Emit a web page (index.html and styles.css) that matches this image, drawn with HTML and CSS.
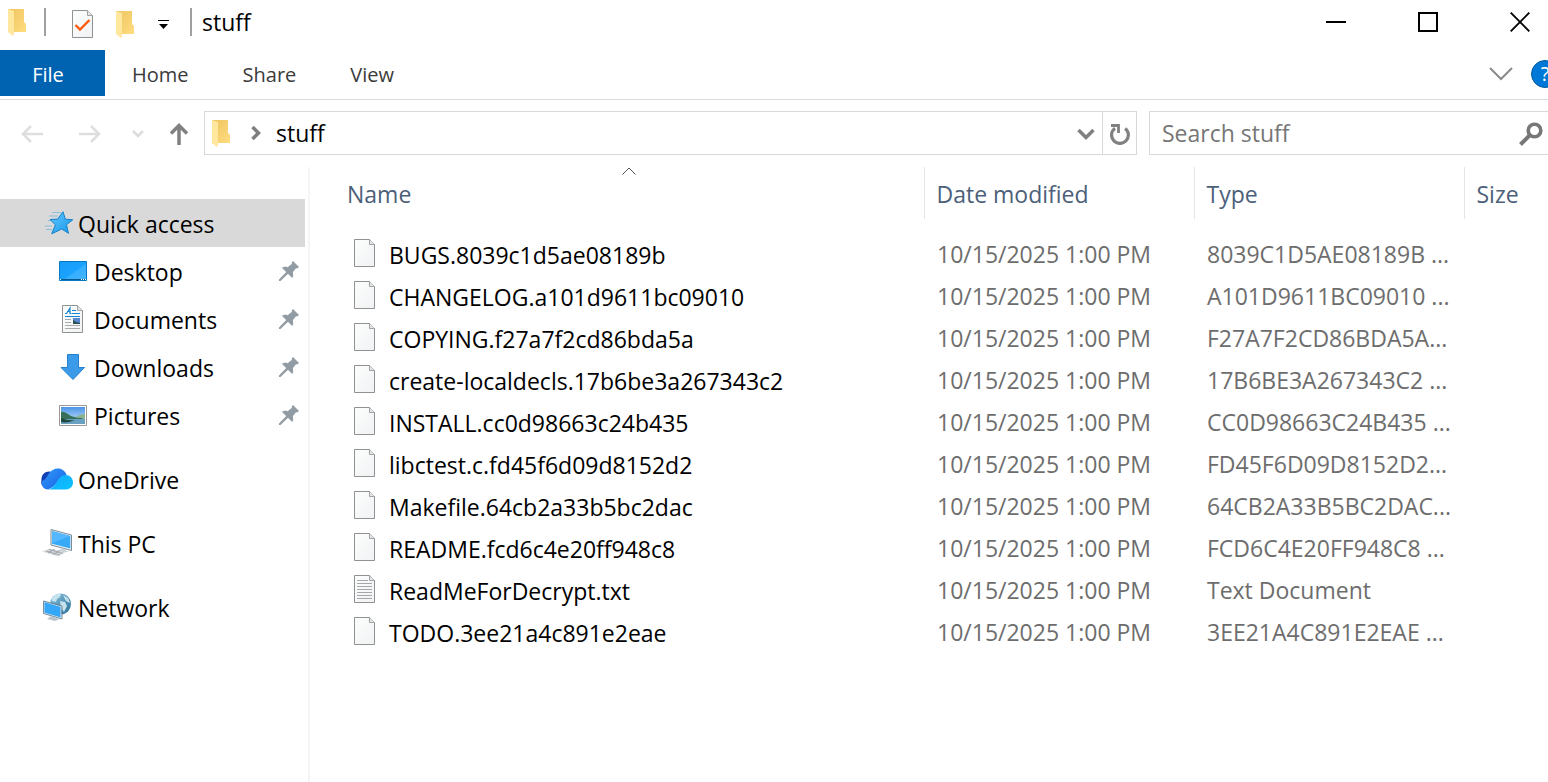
FILE: index.html
```html
<!doctype html>
<html lang="en">
<head>
	<meta charset="UTF-8">
	<title>stuff</title>
	<link rel="stylesheet" href="styles.css">
</head>
<body>
	<!-- shared icons -->
	<svg class="defs" aria-hidden="true">
		<defs>
			<linearGradient id="gFolder" x1="0" x2="1" y2="1"><stop offset="0" stop-color="#eec35f"/><stop offset="1" stop-color="#ffdd80"/></linearGradient>
			<linearGradient id="gPaper" x2="1" y2="1"><stop offset="0" stop-color="#fdfefe"/><stop offset="1" stop-color="#f0f2f3"/></linearGradient>
			<linearGradient id="gScreen" x2="1" y2="1"><stop offset="0" stop-color="#169cf8"/><stop offset=".55" stop-color="#1ba2ff"/><stop offset=".56" stop-color="#35aeff"/><stop offset="1" stop-color="#45b4ff"/></linearGradient>
			<linearGradient id="gStar" x2="1" y2="1"><stop offset="0" stop-color="#63c8ff"/><stop offset="1" stop-color="#1695e8"/></linearGradient>
			<linearGradient id="gCloud" x2="1" y2="1"><stop offset="0" stop-color="#2f9bf8"/><stop offset="1" stop-color="#1a5ee6"/></linearGradient>
			<linearGradient id="gCloud2" x2="1" y2="1"><stop offset="0" stop-color="#12a8fb"/><stop offset="1" stop-color="#0cc3ff"/></linearGradient>
			<linearGradient id="gGlobe" x2="1" y2="1"><stop offset="0" stop-color="#8fc4dd"/><stop offset="1" stop-color="#246f99"/></linearGradient>
			<linearGradient id="gSky" x2="0" y2="1"><stop offset="0" stop-color="#4a93e8"/><stop offset="1" stop-color="#d5ecfa"/></linearGradient>
		</defs>
		<symbol id="folder" viewBox="0 0 19 27">
			<path d="M0 0h16v13l2 2v8H5z" fill="url(#gFolder)"/>
			<path d="M0 0l6 2v23l-1 2-5-4z" fill="#ffe79d"/>
		</symbol>
		<symbol id="file" viewBox="0 0 21 28">
			<path d="M.5.5h15l5 5v22H.5z" fill="url(#gPaper)" stroke="#8f9193"/>
			<path d="M15.500.5v5h5" fill="#e4e6e7" stroke="#a0a2a4"/>
		</symbol>
		<symbol id="text" viewBox="0 0 21 28">
			<use href="#file"/>
			<path d="M3 5.500h11M3 8.500h15M3 11.500h15M3 14.500h15M3 17.500h15M3 20.500h15M3 23.500h15" stroke="#a5a7a9"/>
		</symbol>
		<symbol id="pin" viewBox="0 0 20 20">
			<path d="M14 0l6 6-2 1.500-1-.3-3.200 4c.8 2.300.5 4.500-.6 5.800L9 12.800 1.500 20H0v-1.500L7.200 11 3 7c1.500-1.400 3.800-1.400 5.600-.7L12.800 3V1.500z" fill="#919ba3"/>
		</symbol>
	</svg>

	<header class="titlebar">
		<svg class="folder" aria-hidden="true"><use href="#folder"/></svg>
		<span class="sep"></span>
		<button class="quick props" aria-label="Properties">
			<svg width="21" height="28" viewBox="0 0 21 28"><use href="#file"/><path d="M3.500 15l4.500 4.500 9.500-9.500" fill="none" stroke="#fa5a0f" stroke-width="2.400"/></svg>
		</button>
		<button class="quick new" aria-label="New folder"><svg class="folder"><use href="#folder"/></svg></button>
		<button class="quick more" aria-label="Customize Quick Access Toolbar">
			<svg width="11" height="9" viewBox="0 0 11 9"><path d="M0 0h11v1H0zM1 4h9L5.500 9z"/></svg>
		</button>
		<span class="sep"></span>
		<h1>stuff</h1>
		<div class="winbtns">
			<button aria-label="Minimize"><svg width="20" height="20"><path d="M0 10h20" stroke="#000" stroke-width="2"/></svg></button>
			<button aria-label="Maximize"><svg width="20" height="20"><path d="M1 1h18v18H1z" fill="none" stroke="#000" stroke-width="2"/></svg></button>
			<button aria-label="Close"><svg width="20" height="20"><path d="M.7.7l18.600 18.600M19.300.7L.7 19.300" stroke="#000" stroke-width="1.900"/></svg></button>
		</div>
	</header>

	<nav class="ribbon">
		<button class="tab on">File</button>
		<button class="tab">Home</button>
		<button class="tab">Share</button>
		<button class="tab">View</button>
		<button class="expand" aria-label="Expand the Ribbon"><svg width="24" height="14"><path d="M1 1l11 11L23 1" fill="none" stroke="#8a8a8a" stroke-width="2"/></svg></button>
		<button class="help" aria-label="Help">?</button>
	</nav>

	<div class="toolbar">
		<button class="back" aria-label="Back" disabled><svg width="22" height="18"><path d="M22 9H2M10 1L2 9l8 8" fill="none" stroke="#dedede" stroke-width="2.500"/></svg></button>
		<button class="forward" aria-label="Forward" disabled><svg width="22" height="18"><path d="M0 9h20M12 1l8 8-8 8" fill="none" stroke="#dedede" stroke-width="2.500"/></svg></button>
		<button class="recent" aria-label="Recent locations"><svg width="12" height="8"><path d="M1 1l5 5 5-5" fill="none" stroke="#dcdcdc" stroke-width="2.500"/></svg></button>
		<button class="up" aria-label="Up"><svg width="18" height="22"><path d="M9 22V2M1 10.500l8-8 8 8" fill="none" stroke="#808080" stroke-width="3.500"/></svg></button>
		<div class="address">
			<svg class="folder" aria-hidden="true"><use href="#folder"/></svg>
			<svg class="arrow" width="10" height="14" aria-hidden="true"><path d="M1.500 1l6 6-6 6" fill="none" stroke="#7e7e7e" stroke-width="3.500"/></svg>
			<a href="#">stuff</a>
			<button class="drop" aria-label="Previous locations"><svg width="18" height="12"><path d="M1.500 2L9 9.500 16.500 2" fill="none" stroke="#808080" stroke-width="3.500"/></svg></button>
			<button class="refresh" aria-label="Refresh">
				<svg width="20" height="21"><path d="M15.200 4.400A8.400 8.400 0 1 1 5 4.200" fill="none" stroke="#808080" stroke-width="3.200"/><path d="M1 1.500h7.500V9" fill="none" stroke="#808080" stroke-width="2.800"/></svg>
			</button>
		</div>
		<form class="search">
			<input type="text" placeholder="Search stuff" aria-label="Search stuff">
			<button type="button" aria-label="Search"><svg width="24" height="24"><circle cx="15.500" cy="8.500" r="6.300" fill="none" stroke="#777" stroke-width="3.600"/><path d="M11 13L1.500 22.500" stroke="#777" stroke-width="4"/></svg></button>
		</form>
	</div>

	<div class="main">
		<nav class="side">
			<ul>
				<li class="on"><a href="#">
					<svg width="28" height="24" viewBox="0 0 28 24"><path d="M7 1.500h9M4 5h9M3 9.500h6M0 15h7M1 18.500h6" stroke="#79b8df" stroke-width=".8"/><path d="M18 .8l2.400 7.500 7.400.4-6.300 5 2 8.600-6.800-4.300-10 4.800 3.700-9L5 8.500l7.700-.4z" fill="url(#gStar)" stroke="#1481cc"/></svg>
					<span>Quick access</span></a></li>
				<li class="sub"><a href="#">
					<svg width="28" height="20" viewBox="0 0 28 20"><path d="M.5.5h27v19H.5z" fill="url(#gScreen)" stroke="#0878c4"/><path d="M1 18.500h26" stroke="#09598f"/><path d="M1 18.500h1M22 18.500h1M24 18.500h1M26 18.500h1" stroke="#fff"/></svg>
					<span>Desktop</span><svg class="pin"><use href="#pin"/></svg></a></li>
				<li class="sub"><a href="#">
					<svg width="28" height="28" viewBox="0 0 28 28"><g transform="translate(3)"><use href="#file" width="21" height="28"/><path d="M3 8.500h1.500L8 3v5.500h1.500M5 6.500h3M10 5.500h4M10 8.500h8M3 11.500h15" fill="none" stroke="#1787d3" stroke-width="1.200"/><path d="M3 14.500h6M3 17.500h6M3 20.500h15M3 23.500h15" stroke="#aaa"/><path d="M11 13h7v6h-7z" fill="#5687cf"/><path d="M11 15l3 2 4 1v1h-7z" fill="#28504e"/></g></svg>
					<span>Documents</span><svg class="pin"><use href="#pin"/></svg></a></li>
				<li class="sub"><a href="#">
					<svg width="28" height="26" viewBox="0 0 28 26"><path d="M8.500.5h11v13h6L14 25.500 2 13.500h6.500z" fill="#3b9be8" stroke="#2580ce"/></svg>
					<span>Downloads</span><svg class="pin"><use href="#pin"/></svg></a></li>
				<li class="sub"><a href="#">
					<svg width="28" height="21" viewBox="0 0 28 21"><path d="M.5.5h27v20H.5z" fill="#fff" stroke="#999"/><path d="M2 2h24v17H2z" fill="url(#gSky)"/><path d="M2 7c4-1 6 2 10 4 3 1 8 2 12 2v2H2z" fill="#36705b"/><path d="M17 12c3-2 6-3 9-3v5z" fill="#8db08f"/><path d="M2 14h24v5H2z" fill="#6aa0c2"/><path d="M2 13c4 1 7 3 14 2-4 2-10 3-14 2z" fill="#214b41"/></svg>
					<span>Pictures</span><svg class="pin"><use href="#pin"/></svg></a></li>
				<li class="root"><a href="#">
					<svg width="32" height="22" viewBox="0 0 32 22"><path d="M4 20a7 7 0 0 1-3.500-8C0 7 4 3 9 3.500l5 6L8 20z" fill="#123fb5"/><path d="M7 21.500C2 21.500 0 17 1 13 4 13 6 8 8.500 4.800 12.500-1 22-1.500 25.500 6.500l-1 4C17 10 15 19 7 21.500z" fill="url(#gCloud)"/><path d="M7 21.500C16 20 16 7 24.500 7c4.500 0 7.500 3.300 7.500 7.500 0 4-3 7-7 7z" fill="url(#gCloud2)"/></svg>
					<span>OneDrive</span></a></li>
				<li class="root"><a href="#">
					<svg width="32" height="28" viewBox="0 0 32 28"><path d="M10 .5l20.500 5.500v15.500L10 16z" fill="#eef3f6" stroke="#7b8b95"/><path d="M11 2l18.300 5v12.500L11 14.700z" fill="#39aaf8"/><path d="M11 2l18.300 5L11 14z" fill="#53b8ff"/><path d="M20 19l5 1.500v1l3 1-5 1-7-2 4-1z" fill="#cbd3d8"/><path d="M1 22.500l8-3 15 4-7 4z" fill="#d6d9db"/><path d="M5 22l14 4M8 20.500l14 4M7 24l7-4M12 25.500l7-4" stroke="#8e9498" stroke-width=".7"/></svg>
					<span>This PC</span></a></li>
				<li class="root"><a href="#">
					<svg width="32" height="28" viewBox="0 0 32 28"><circle cx="19.500" cy="11" r="10.500" fill="url(#gGlobe)"/><path d="M11 5c3-4 6-5 9-4l-1 3-3 2-1 3-4-1zM22 2l5 3 2 5-4-2zM19 8l5 1 2 4-3 6-3-4z" fill="#c5e3ef"/><path d="M3 8.500l17 5V25L3 20z" fill="#35a7f8" stroke="#d9e4ea"/><path d="M2.500 8l18.500 5v13L2.500 20.500z" fill="none" stroke="#587487" stroke-width=".8"/><path d="M10 23l5 2 4 1-5 2-8-2z" fill="#bcc6cc"/></svg>
					<span>Network</span></a></li>
			</ul>
		</nav>

		<main class="list">
			<table>
				<colgroup>
					<col>
					<col class="date">
					<col class="type">
					<col class="size">
				</colgroup>
				<thead>
					<tr>
						<th><svg class="sort" width="14" height="8"><path d="M.5 7.500L7 1l6.500 6.500" fill="none" stroke="#555"/></svg><button>Name</button></th>
						<th><button>Date modified</button></th>
						<th><button>Type</button></th>
						<th><button>Size</button></th>
					</tr>
				</thead>
				<tbody>
					<tr><td><svg class="file"><use href="#file"/></svg>BUGS.8039c1d5ae08189b</td><td>10/15/2025 1:00 PM</td><td>8039C1D5AE08189B ...</td><td></td></tr>
					<tr><td><svg class="file"><use href="#file"/></svg>CHANGELOG.a101d9611bc09010</td><td>10/15/2025 1:00 PM</td><td>A101D9611BC09010 ...</td><td></td></tr>
					<tr><td><svg class="file"><use href="#file"/></svg>COPYING.f27a7f2cd86bda5a</td><td>10/15/2025 1:00 PM</td><td>F27A7F2CD86BDA5A...</td><td></td></tr>
					<tr><td><svg class="file"><use href="#file"/></svg>create-localdecls.17b6be3a267343c2</td><td>10/15/2025 1:00 PM</td><td>17B6BE3A267343C2 ...</td><td></td></tr>
					<tr><td><svg class="file"><use href="#file"/></svg>INSTALL.cc0d98663c24b435</td><td>10/15/2025 1:00 PM</td><td>CC0D98663C24B435 ...</td><td></td></tr>
					<tr><td><svg class="file"><use href="#file"/></svg>libctest.c.fd45f6d09d8152d2</td><td>10/15/2025 1:00 PM</td><td>FD45F6D09D8152D2...</td><td></td></tr>
					<tr><td><svg class="file"><use href="#file"/></svg>Makefile.64cb2a33b5bc2dac</td><td>10/15/2025 1:00 PM</td><td>64CB2A33B5BC2DAC...</td><td></td></tr>
					<tr><td><svg class="file"><use href="#file"/></svg>README.fcd6c4e20ff948c8</td><td>10/15/2025 1:00 PM</td><td>FCD6C4E20FF948C8 ...</td><td></td></tr>
					<tr><td><svg class="file"><use href="#text"/></svg>ReadMeForDecrypt.txt</td><td>10/15/2025 1:00 PM</td><td>Text Document</td><td></td></tr>
					<tr><td><svg class="file"><use href="#file"/></svg>TODO.3ee21a4c891e2eae</td><td>10/15/2025 1:00 PM</td><td>3EE21A4C891E2EAE ...</td><td></td></tr>
				</tbody>
			</table>
		</main>
	</div>
</body>
</html>
```
FILE: styles.css
```css
*{
	margin: 0;
	padding: 0;
	box-sizing: border-box;
}
body{
	min-height: 100vh;
	display: flex;
	flex-direction: column;
	background: #fff;
	color: #000;
	font: 23px/30px "Open Sans","Noto Sans",sans-serif;
	overflow-x: hidden;
}
ul{
	list-style: none;
}
a{
	color: inherit;
	text-decoration: none;
}
button{
	border: 0;
	background: none;
	font: inherit;
	color: inherit;
	display: flex;
	align-items: center;
	justify-content: center;
	flex-shrink: 0;
}
svg{
	display: block;
	flex-shrink: 0;
}
.defs{
	position: absolute;
	width: 0;
	height: 0;
}
.folder{
	width: 19px;
	height: 27px;
}
/* title bar */
.titlebar{
	height: 50px;
	padding: 0 0 6px 8px;
	display: flex;
	align-items: center;
	overflow: hidden;
}
.titlebar .sep{
	width: 2px;
	height: 28px;
	margin-left: 17px;
	background: #a0a0a0;
}
.quick{
	height: 30px;
	padding-top: 4px;
}
.props{
	margin-left: 26px;
}
.new{
	margin-left: 23px;
}
.more{
	margin-left: 23px;
}
.titlebar .more + .sep{
	margin-left: 21px;
}
.titlebar h1{
	margin-left: 10px;
	font-size: 23px;
	font-weight: normal;
}
.winbtns{
	display: flex;
	margin: 0 -18px 0 auto;
}
.winbtns button{
	width: 92px;
	height: 42px;
}
/* ribbon */
.ribbon{
	height: 50px;
	padding-bottom: 3px;
	border-bottom: 1px solid #dadbdc;
	display: flex;
	align-items: center;
	overflow: hidden;
	color: #3b3b3b;
	font-size: 20px;
}
.tab{
	height: 46px;
	padding: 4px 27px 0;
}
.tab.on{
	width: 105px;
	padding: 4px 9px 0 0;
	background: #0063b1;
	color: #fff;
}
.expand{
	margin: 2px 0 0 auto;
}
.help{
	width: 28px;
	height: 28px;
	margin: 2px -11px 0 18px;
	border: 1px solid #005a9e;
	border-radius: 50%;
	background: #0078d7;
	color: #fff;
}
/* address row */
.toolbar{
	height: 44px;
	margin-top: 11px;
	padding-left: 21px;
	display: flex;
	align-items: center;
}
.toolbar button{
	padding-top: 2px;
}
.forward{
	margin-left: 36px;
}
.recent{
	margin-left: 31px;
}
.up{
	margin: 0 16px 0 26px;
}
.address{
	flex: 1;
	height: 44px;
	padding-left: 7px;
	border: 1px solid #d9d9d9;
	display: flex;
	align-items: center;
}
.address .arrow{
	margin: 0 15px 0 20px;
}
.address a{
	flex: 1;
}
.drop{
	width: 32px;
	height: 42px;
}
.refresh{
	width: 34px;
	height: 42px;
	border-left: 1px solid #d9d9d9;
}
.search{
	width: 399px;
	height: 44px;
	margin-left: 12px;
	padding: 0 5px 0 12px;
	border: 1px solid #d9d9d9;
	border-right: 0;
	display: flex;
	align-items: center;
}
.search input{
	flex: 1;
	min-width: 0;
	border: 0;
	outline: 0;
	background: none;
	font: inherit;
}
.search input::placeholder{
	color: #767676;
	opacity: 1;
}
/* content */
.main{
	flex: 1;
	display: flex;
	padding-top: 12px;
}
.side{
	width: 310px;
	padding: 32px 3px 0 0;
	border-right: 2px solid #f5f5f5;
}
.side a{
	height: 48px;
	padding: 0 6px 0 41px;
	display: flex;
	align-items: center;
	gap: 5px;
}
.side .on{
	background: #d9d9d9;
}
.side .on a{
	padding-left: 45px;
}
.side .sub a{
	padding-left: 59px;
	gap: 7px;
}
.side .root{
	margin-top: 16px;
}
.side span{
	flex: 1;
	padding-top: 2px;
}
.side .pin{
	width: 20px;
	height: 20px;
}
.list{
	flex: 1;
	padding-left: 25px;
}
table{
	width: 100%;
	table-layout: fixed;
	border-collapse: collapse;
}
.date,
.type{
	width: 270px;
}
.size{
	width: 84px;
}
th{
	position: relative;
	height: 52px;
	padding: 2px 12px 0;
	border-left: 1px solid #e5e5e5;
	font-weight: normal;
	color: #4c607a;
}
th:first-child{
	border-left: 0;
}
.sort{
	position: absolute;
	top: 0;
	left: 50%;
	margin-left: -7px;
}
td{
	height: 42px;
	padding-left: 13px;
	color: #6d6d6d;
	white-space: nowrap;
}
td:first-child{
	padding-left: 19px;
	color: #000;
}
tbody::before{
	content: "";
	display: block;
	height: 14px;
}
.file{
	display: inline-block;
	width: 21px;
	height: 28px;
	margin-right: 14px;
	vertical-align: -3px;
}
```
